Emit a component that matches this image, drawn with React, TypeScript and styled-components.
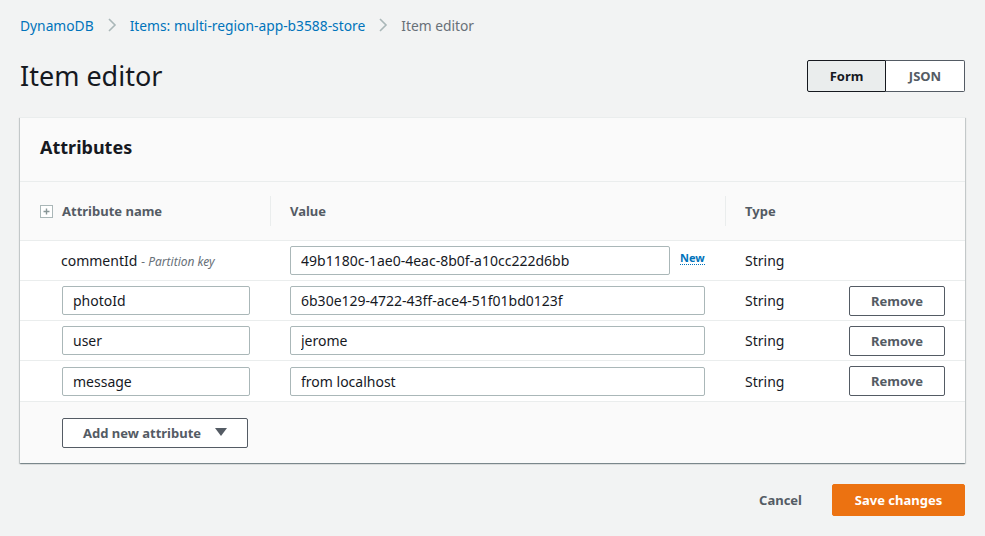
import styled, { createGlobalStyle } from "styled-components";

const GlobalStyle = createGlobalStyle`
	html, body {
		margin: 0;
		padding: 0;
		background: #f2f3f3;
		font-family: "Noto Sans", "Open Sans", Roboto, sans-serif;
		color: #16191f;
	}
	* { box-sizing: border-box; }
`;

const Page = styled.div`
	width: 985px;
	height: 536px;
	padding: 0 20px;
	display: flex;
	flex-direction: column;
`;

const Breadcrumbs = styled.nav`
	display: flex;
	align-items: center;
	height: 50px;
	font-size: 13.8px;
	gap: 13px;
`;

const Crumb = styled.a<{ $current?: boolean }>`
	color: ${(p) => (p.$current ? "#687078" : "#0073bb")};
	text-decoration: none;
`;

const Chevron = () => (
	<svg width="10" height="14" viewBox="0 0 10 14">
		<path d="M2 1l6 6-6 6" fill="none" stroke="#aab7b8" strokeWidth="1.6" />
	</svg>
);

const HeaderRow = styled.div`
	display: flex;
	justify-content: space-between;
	align-items: center;
	height: 50px;
	margin-bottom: 17px;
`;

const Title = styled.h1`
	margin: 0;
	font-size: 27px;
	font-weight: 400;
	color: #16191f;
`;

const Segmented = styled.div`
	display: flex;
	margin-top: 1px;
`;

const SegButton = styled.button<{ $active?: boolean }>`
	width: 79px;
	height: 32px;
	font-family: inherit;
	font-size: 13px;
	font-weight: 700;
	background: ${(p) => (p.$active ? "#eaeded" : "#ffffff")};
	color: ${(p) => (p.$active ? "#16191f" : "#545b64")};
	border: 1px solid ${(p) => (p.$active ? "#16191f" : "#545b64")};
	border-radius: ${(p) => (p.$active ? "2px 0 0 2px" : "0 2px 2px 0")};
	${(p) => (p.$active ? "" : "border-left: none;")}
	padding: 0;
`;

const Card = styled.section`
	background: #ffffff;
	box-shadow: 0 1px 1px 0 rgba(0, 28, 36, 0.3), 1px 1px 1px 0 rgba(0, 28, 36, 0.15),
		-1px 1px 1px 0 rgba(0, 28, 36, 0.15);
	border-top: 1px solid #eaeded;
`;

const CardHeader = styled.div`
	background: #fafafa;
	height: 64px;
	padding: 0 20px 6px;
	display: flex;
	align-items: center;
	border-bottom: 1px solid #eaeded;
`;

const CardTitle = styled.h2`
	margin: 0;
	font-size: 18px;
	font-weight: 700;
	color: #16191f;
`;

const Grid = styled.div`
	display: grid;
	grid-template-columns: 250px 455px 240px;
`;

const HeadCell = styled.div<{ $divider?: boolean; $indent?: number }>`
	height: 59px;
	background: #fafafa;
	border-bottom: 1px solid #eaeded;
	display: flex;
	align-items: center;
	gap: 9px;
	padding-left: ${(p) => p.$indent ?? 20}px;
	font-size: 13px;
	font-weight: 700;
	color: #545b64;
	position: relative;
	&::before {
		content: "";
		display: ${(p) => (p.$divider ? "block" : "none")};
		position: absolute;
		left: 0;
		top: 14px;
		bottom: 14px;
		border-left: 1px solid #eaeded;
	}
`;

const ExpandIcon = () => (
	<svg width="13" height="13" viewBox="0 0 13 13">
		<rect x="0.5" y="0.5" width="12" height="12" fill="#fff" stroke="#aab7b8" />
		<path d="M6.5 3.5v6M3.5 6.5h6" stroke="#879596" strokeWidth="1.4" />
	</svg>
);

const Cell = styled.div<{ $indent?: number; $last?: boolean }>`
	height: 40px;
	display: flex;
	align-items: center;
	padding-left: ${(p) => p.$indent ?? 20}px;
	padding-right: 20px;
	border-bottom: ${(p) => (p.$last ? "none" : "1px solid #eaeded")};
	font-size: 14px;
	color: #16191f;
	gap: 10px;
`;

const KeyHint = styled.span`
	font-size: 12px;
	font-style: italic;
	color: #687078;
	margin-left: -6px;
	margin-top: 1px;
`;

const TextInput = styled.input<{ $width: number }>`
	width: ${(p) => p.$width}px;
	height: 29px;
	border: 1px solid #aab7b8;
	border-radius: 2px;
	padding: 0 10px;
	font-family: inherit;
	font-size: 14px;
	color: #16191f;
	background: #fff;
	outline: none;
`;

const NewBadge = styled.span`
	font-size: 11px;
	font-weight: 700;
	color: #0073bb;
	border-bottom: 1px dotted #0073bb;
	line-height: 13px;
	margin-top: -6px;
`;

const TypeCell = styled(Cell)`
	gap: 0;
`;

const TypeText = styled.span`
	width: 104px;
	flex-shrink: 0;
`;

const OutlineButton = styled.button<{ $width: number }>`
	width: ${(p) => p.$width}px;
	height: 30px;
	background: #fff;
	border: 1px solid #545b64;
	border-radius: 2px;
	font-family: inherit;
	font-size: 13px;
	font-weight: 700;
	color: #545b64;
	display: flex;
	align-items: center;
	justify-content: center;
	gap: 14px;
	padding: 0;
	flex-shrink: 0;
`;

const CardFooter = styled.div`
	background: #fafafa;
	border-top: 1px solid #eaeded;
	height: 62px;
	padding-left: 42px;
	display: flex;
	align-items: center;
`;

const Caret = () => (
	<svg width="12" height="9" viewBox="0 0 12 9">
		<path d="M0 0h12L6 8z" fill="#545b64" />
	</svg>
);

const Actions = styled.div`
	display: flex;
	justify-content: flex-end;
	align-items: center;
	gap: 30px;
	margin-top: 21px;
`;

const LinkButton = styled.button`
	background: none;
	border: none;
	font-family: inherit;
	font-size: 13px;
	font-weight: 700;
	color: #545b64;
	padding: 0;
`;

const PrimaryButton = styled.button`
	width: 133px;
	height: 32px;
	background: #ec7211;
	border: 1px solid #ec7211;
	border-radius: 2px;
	color: #fff;
	font-family: inherit;
	font-size: 13px;
	font-weight: 700;
`;

const rows = [
	{ name: "photoId", value: "6b30e129-4722-43ff-ace4-51f01bd0123f" },
	{ name: "user", value: "jerome" },
	{ name: "message", value: "from localhost" },
];

export default function App() {
	return (
		<Page>
			<GlobalStyle />
			<Breadcrumbs>
				<Crumb>DynamoDB</Crumb>
				<Chevron />
				<Crumb>Items: multi-region-app-b3588-store</Crumb>
				<Chevron />
				<Crumb $current>Item editor</Crumb>
			</Breadcrumbs>
			<HeaderRow>
				<Title>Item editor</Title>
				<Segmented>
					<SegButton $active>Form</SegButton>
					<SegButton>JSON</SegButton>
				</Segmented>
			</HeaderRow>
			<Card>
				<CardHeader>
					<CardTitle>Attributes</CardTitle>
				</CardHeader>
				<Grid>
					<HeadCell>
						<ExpandIcon />
						Attribute name
					</HeadCell>
					<HeadCell $divider>Value</HeadCell>
					<HeadCell $divider>Type</HeadCell>

					<Cell $indent={41}>
						commentId <KeyHint>- Partition key</KeyHint>
					</Cell>
					<Cell>
						<TextInput $width={380} defaultValue="49b1180c-1ae0-4eac-8b0f-a10cc222d6bb" readOnly />
						<NewBadge>New</NewBadge>
					</Cell>
					<TypeCell>
						<TypeText>String</TypeText>
					</TypeCell>

					{rows.map((r, i) => (
						<Row key={r.name} name={r.name} value={r.value} last={i === rows.length - 1} />
					))}
				</Grid>
				<CardFooter>
					<OutlineButton $width={186}>
						Add new attribute <Caret />
					</OutlineButton>
				</CardFooter>
			</Card>
			<Actions>
				<LinkButton>Cancel</LinkButton>
				<PrimaryButton>Save changes</PrimaryButton>
			</Actions>
		</Page>
	);
}

function Row({ name, value, last }: { name: string; value: string; last: boolean }) {
	return (
		<>
			<Cell $indent={42} $last={last}>
				<TextInput $width={188} defaultValue={name} />
			</Cell>
			<Cell $last={last}>
				<TextInput $width={415} defaultValue={value} />
			</Cell>
			<TypeCell $last={last}>
				<TypeText>String</TypeText>
				<OutlineButton $width={96}>Remove</OutlineButton>
			</TypeCell>
		</>
	);
}
